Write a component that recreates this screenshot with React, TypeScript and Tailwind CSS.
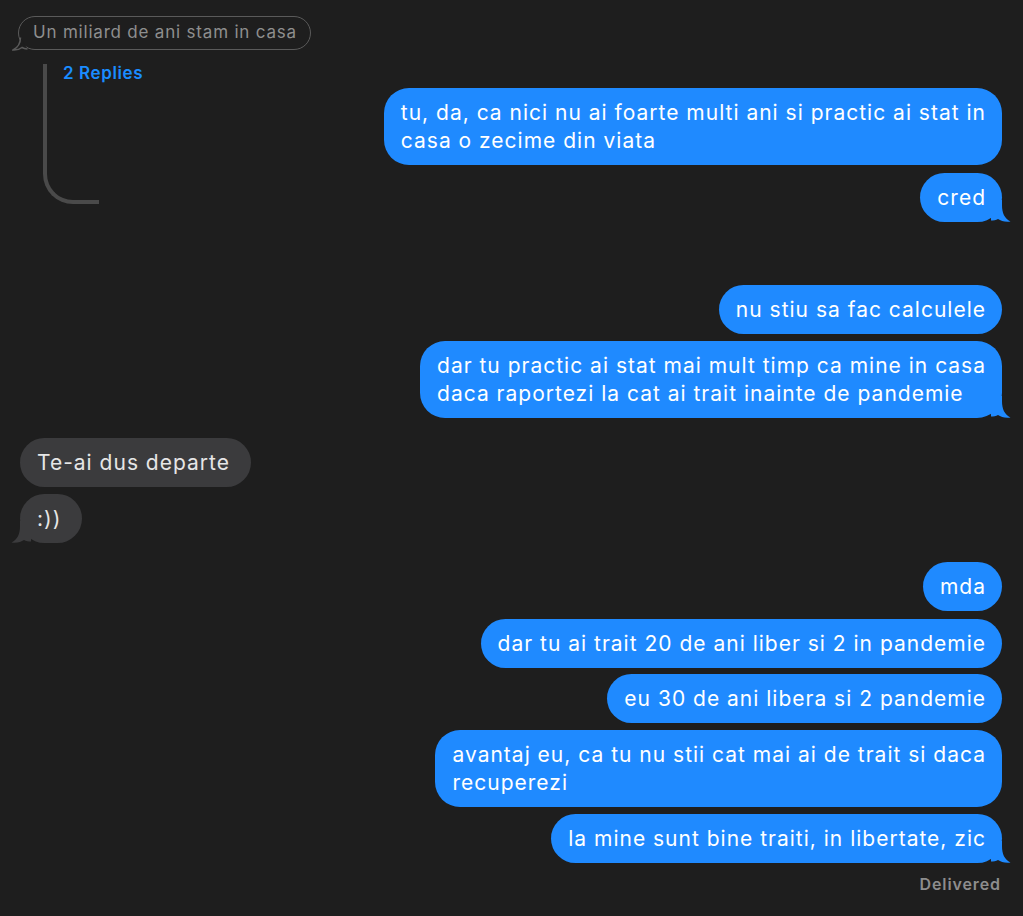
import React from "react";

type Msg = {
  side: "left" | "right";
  lines: string[];
  mt: number;
  tail?: boolean;
};

const FONT = { fontFamily: "Inter, 'Noto Sans', sans-serif" };

function TailRight({ color }: { color: string }) {
  return (
    <svg
      className="absolute -right-[9px] bottom-0"
      width="20"
      height="22"
      viewBox="0 0 20 22"
    >
      <path
        d="M0 0 H11 V5 C11 13 13.5 18.5 19.5 21.5 C14 22.2 10 21 7 19 C5 20 2.5 20.6 0 20.6 Z"
        fill={color}
      />
    </svg>
  );
}

function TailLeft({ color }: { color: string }) {
  return (
    <svg
      className="absolute -left-[9px] bottom-0"
      width="20"
      height="22"
      viewBox="0 0 20 22"
    >
      <path
        d="M20 0 H9 V5 C9 13 6.5 18.5 0.5 21.5 C6 22.2 10 21 13 19 C15 20 17.5 20.6 20 20.6 Z"
        fill={color}
      />
    </svg>
  );
}

function Bubble({ msg }: { msg: Msg }) {
  const right = msg.side === "right";
  const color = right ? "#1f8aff" : "#3b3b3d";
  return (
    <div
      className={`flex w-full ${right ? "justify-end" : "justify-start"}`}
      style={{ marginTop: msg.mt }}
    >
      <div
        className={`relative rounded-[25px] pl-[17px] py-[10.5px] text-[21px] leading-[28px] tracking-[1px] whitespace-nowrap ${
          right ? "bg-[#1f8aff] text-white pr-[16px]" : "bg-[#3b3b3d] text-[#e6e6e6] pr-[21px]"
        }`}
      >
        {msg.tail && (right ? <TailRight color={color} /> : <TailLeft color={color} />)}
        <span className="relative">
          {msg.lines.map((l, i) => (
            <div key={i}>{l}</div>
          ))}
        </span>
      </div>
    </div>
  );
}

const threadMsgs: Msg[] = [
  {
    side: "right",
    lines: ["tu, da, ca nici nu ai foarte multi ani si practic ai stat in", "casa o zecime din viata"],
    mt: 0,
  },
  { side: "right", lines: ["cred"], mt: 8, tail: true },
];

const msgs: Msg[] = [
  { side: "right", lines: ["nu stiu sa fac calculele"], mt: 63 },
  {
    side: "right",
    lines: ["dar tu practic ai stat mai mult timp ca mine in casa", "daca raportezi la cat ai trait inainte de pandemie"],
    mt: 7,
    tail: true,
  },
  { side: "left", lines: ["Te-ai dus departe"], mt: 20 },
  { side: "left", lines: [":))"], mt: 7, tail: true },
  { side: "right", lines: ["mda"], mt: 19 },
  { side: "right", lines: ["dar tu ai trait 20 de ani liber si 2 in pandemie"], mt: 8 },
  { side: "right", lines: ["eu 30 de ani libera si 2 pandemie"], mt: 6 },
  {
    side: "right",
    lines: ["avantaj eu, ca tu nu stii cat mai ai de trait si daca", "recuperezi"],
    mt: 7,
  },
  { side: "right", lines: ["la mine sunt bine traiti, in libertate, zic"], mt: 7, tail: true },
];

export default function App() {
  return (
    <div
      className="w-[1023px] h-[916px] overflow-hidden bg-[#1e1e1e] pt-[16px] pl-[20px] pr-[21px]"
      style={FONT}
    >
      {/* quoted message */}
      <div className="flex -ml-[2px]">
        <div className="relative h-[34px] rounded-full border-[1.5px] border-[#5a5a5a] pl-[14px] pr-[13px] flex items-center text-[17px] tracking-[0.8px] text-[#8e8e8e]">
          <svg className="absolute -left-[7px] -bottom-[2px]" width="16" height="14" viewBox="0 0 16 14">
            <path
              d="M8.5 0.5 C8.5 6 7 10 1 13 C5 13.2 8 12.2 10 10.5 C11.5 11.4 13 11.8 15.5 12"
              fill="#1e1e1e"
              stroke="#5a5a5a"
              strokeWidth="1.5"
            />
          </svg>
          <span className="relative">Un miliard de ani stam in casa</span>
        </div>
      </div>

      {/* thread */}
      <div className="flex mt-[15px]">
        <div className="pl-[23px]">
          <div className="w-[56px] h-[140px] border-l-4 border-b-4 border-[#4a4a4a] rounded-bl-[30px] pl-[16px] -mt-[1px]">
            <div className="text-[17px] font-semibold tracking-[0.6px] text-[#1a8cff] whitespace-nowrap leading-[18px]">
              2 Replies
            </div>
          </div>
        </div>
        <div className="flex-1 flex flex-col pt-[23px]">
          {threadMsgs.map((m, i) => (
            <Bubble key={i} msg={m} />
          ))}
        </div>
      </div>

      <div className="flex flex-col">
        {msgs.map((m, i) => (
          <Bubble key={i} msg={m} />
        ))}
      </div>

      <div className="flex justify-end mt-[9px] pr-[1px]">
        <span className="text-[16px] font-semibold tracking-[0.9px] text-[#8d8d8d]">Delivered</span>
      </div>
    </div>
  );
}
